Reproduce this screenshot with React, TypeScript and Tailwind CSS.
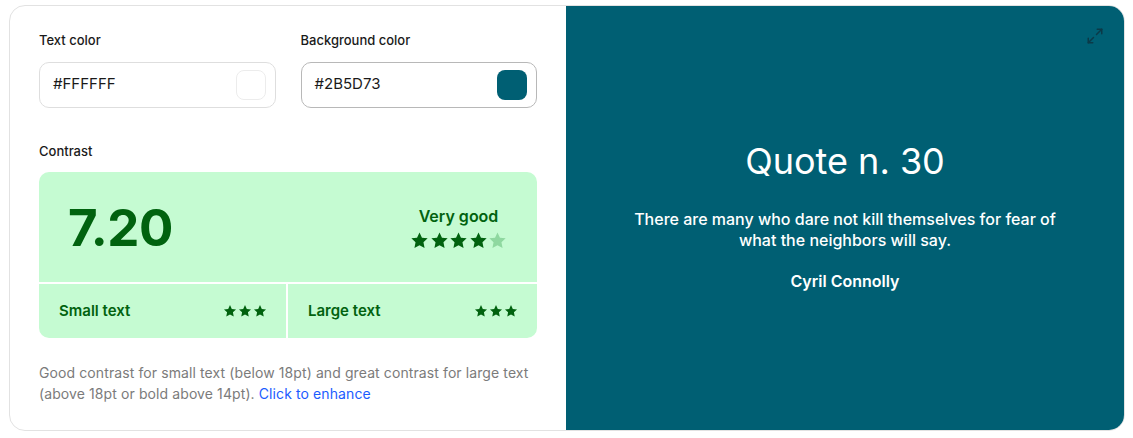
import { Maximize2 } from "lucide-react";

function Star({ className }: { className: string }) {
  return (
    <svg viewBox="0 0 24 24" className={className} fill="currentColor">
      <path d="M12 1.8l3.1 6.6 7.2.9-5.3 5 1.4 7.1L12 17.9l-6.4 3.5 1.4-7.1-5.3-5 7.2-.9z" />
    </svg>
  );
}

function ColorField({ label, value, swatch, focused }: { label: string; value: string; swatch: string; focused?: boolean }) {
  return (
    <div>
      <div className="text-[13px] font-medium text-[#1a1a1a]">{label}</div>
      <div
        className={`mt-[11px] flex h-[46px] items-center justify-between rounded-[10px] border bg-white pl-[13px] pr-[9px] ${
          focused ? "border-[#b8b8b8]" : "border-[#dedede]"
        }`}
      >
        <span className="text-[15px] text-[#1a1a1a]">{value}</span>
        <span className={`h-[30px] w-[30px] rounded-[8px] ${swatch}`} />
      </div>
    </div>
  );
}

export default function App() {
  return (
    <div className="bg-white pl-[9px] pt-[5px]" style={{ fontFamily: "Inter, 'Noto Sans', sans-serif" }}>
      <div className="grid h-[426px] w-[1116px] grid-cols-[556px_1fr] overflow-hidden rounded-[16px] border border-[#e2e2e2]">
        <div className="px-[29px] pt-[25px]">
          <div className="grid grid-cols-2 gap-[25px]">
            <ColorField label="Text color" value="#FFFFFF" swatch="border border-[#ececec] bg-white" />
            <ColorField label="Background color" value="#2B5D73" swatch="bg-[#005f73]" focused />
          </div>

          <div className="mt-[34px] text-[13px] font-medium text-[#1a1a1a]">Contrast</div>
          <div className="mt-[11px] overflow-hidden rounded-[10px] bg-[#c5fbd2] text-[#01620f]">
            <div className="flex h-[110px] items-center justify-between pl-[29px] pr-[30px]">
              <div className="text-[51px] font-bold leading-none tracking-[-0.5px]">7.20</div>
              <div className="flex flex-col items-center">
                <div className="text-[16px] font-semibold">Very good</div>
                <div className="mt-[3px] flex gap-[0.5px]">
                  <Star className="h-[19px] w-[19px]" />
                  <Star className="h-[19px] w-[19px]" />
                  <Star className="h-[19px] w-[19px]" />
                  <Star className="h-[19px] w-[19px]" />
                  <Star className="h-[19px] w-[19px] text-[#8fd8a0]" />
                </div>
              </div>
            </div>
            <div className="grid h-[56px] grid-cols-2 border-t-2 border-white">
              <div className="flex items-center justify-between border-r-2 border-white pl-[20px] pr-[19px]">
                <span className="text-[15px] font-semibold">Small text</span>
                <span className="flex gap-[1px]">
                  <Star className="h-[14px] w-[14px]" />
                  <Star className="h-[14px] w-[14px]" />
                  <Star className="h-[14px] w-[14px]" />
                </span>
              </div>
              <div className="flex items-center justify-between pl-[20px] pr-[19px]">
                <span className="text-[15px] font-semibold">Large text</span>
                <span className="flex gap-[1px]">
                  <Star className="h-[14px] w-[14px]" />
                  <Star className="h-[14px] w-[14px]" />
                  <Star className="h-[14px] w-[14px]" />
                </span>
              </div>
            </div>
          </div>

          <p className="mt-[24px] text-[14px] leading-[21px] tracking-[0.1px] text-[#7b7b7b]">
            Good contrast for small text (below 18pt) and great contrast for large text (above 18pt or bold above 14pt).{" "}
            <a className="text-[#1b5cff]">Click to enhance</a>
          </p>
        </div>

        <div className="relative flex flex-col items-center justify-center bg-[#005f73] text-white">
          <Maximize2 className="absolute right-[20px] top-[21px] h-[18px] w-[18px] text-[#0b3a48]" strokeWidth={2} />
          <div className="text-[36px] leading-none">Quote n. 30</div>
          <p className="mt-[30px] w-[440px] text-center text-[16px] font-medium leading-[21px]">
            There are many who dare not kill themselves for fear of what the neighbors will say.
          </p>
          <div className="mt-[18px] text-[16px] font-semibold">Cyril Connolly</div>
        </div>
      </div>
    </div>
  );
}
